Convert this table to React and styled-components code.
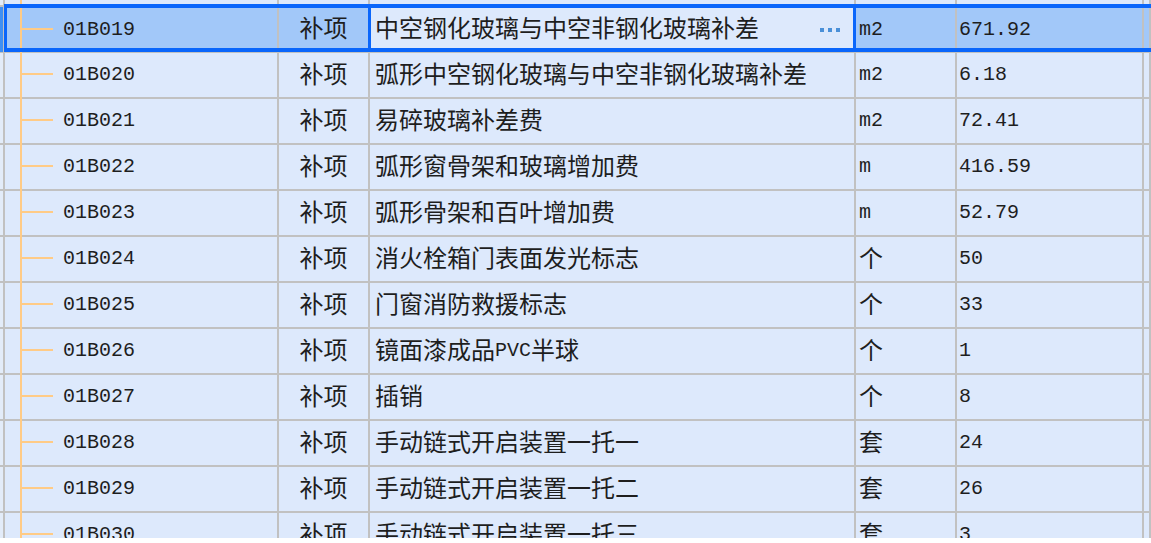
import * as React from "react";
import styled, { createGlobalStyle, css } from "styled-components";

const GlobalStyle = createGlobalStyle`
  html, body {
    margin: 0;
    padding: 0;
    background: #ffffff;
  }
`;

const Viewport = styled.div`
  width: 1151px;
  height: 538px;
  overflow: hidden;
  background: #ffffff;
`;

// scrolled position of the grid: the row above the selection is mostly hidden
const Grid = styled.div`
  margin-top: -39px;
  display: flex;
  flex-direction: column;
  font-family: "Noto Sans CJK SC", "Liberation Sans", sans-serif;
  font-size: 24px;
  color: #1e1e1e;
`;

const Row = styled.div`
  position: relative;
  display: grid;
  grid-template-columns: 5px 274px 91px 486px 101px 187px 1fr;
  height: 46px;
  background: ${({ $selected }) => ($selected ? "#a2c8f9" : "#dde9fc")};

  ${({ $selected }) =>
    $selected &&
    css`
      &::after {
        content: "";
        position: absolute;
        top: -3px;
        bottom: 1px;
        left: 4px;
        right: -10px;
        border: 4px solid #0a66fb;
        border-left-width: 3px;
        pointer-events: none;
        z-index: 2;
      }
    `}
`;

const Cell = styled.div`
  position: relative;
  box-sizing: border-box;
  display: flex;
  align-items: center;
  border-right: 2px solid #c1c1c1;
  border-bottom: 2px solid #c1c1c1;
  padding-left: ${({ $pad }) => $pad ?? 4}px;
  justify-content: ${({ $center }) => ($center ? "center" : "flex-start")};
  white-space: nowrap;
  overflow: hidden;
  line-height: 40px;
`;

const Strip = styled(Cell)`
  padding: 0;
  background: ${({ $selected }) => ($selected ? "#3f8ff3" : "#e3ecf9")};
`;

const CodeCell = styled(Cell)`
  overflow: visible;

  &::before {
    content: "";
    position: absolute;
    left: 15px;
    top: 0;
    bottom: -2px;
    width: 2px;
    background: #ffcb86;
  }

  &::after {
    content: "";
    position: absolute;
    left: 17px;
    width: 31px;
    top: calc(50% - 2px);
    height: 2px;
    background: #ffcb86;
  }
`;

const ActiveCell = styled(Cell)`
  overflow: visible;
  background: #dde9fc;

  &::after {
    content: "";
    position: absolute;
    top: 0;
    bottom: 0;
    left: -2px;
    right: -2px;
    border-left: 3px solid #0a66fb;
    border-right: 3px solid #0a66fb;
    z-index: 3;
    pointer-events: none;
  }
`;

const Han = styled.span`
  margin-bottom: 5px;
`;

const Mono = styled.span`
  font-family: "Liberation Mono", "DejaVu Sans Mono", monospace;
  font-size: 20px;
`;

const Dots = styled.span`
  margin-left: auto;
  margin-right: 14px;
  display: flex;
  gap: 4px;

  i {
    display: block;
    width: 4px;
    height: 4px;
    background: #4a90d8;
  }
`;

function Text({ children }) {
  const parts = String(children).split(/([\x20-\x7e]+)/).filter(Boolean);
  return parts.map((p, i) =>
    /^[\x20-\x7e]+$/.test(p) ? <Mono key={i}>{p}</Mono> : <Han key={i}>{p}</Han>
  );
}

const rows = [
  ["", "", "", "", ""],
  ["01B019", "补项", "中空钢化玻璃与中空非钢化玻璃补差", "m2", "671.92"],
  ["01B020", "补项", "弧形中空钢化玻璃与中空非钢化玻璃补差", "m2", "6.18"],
  ["01B021", "补项", "易碎玻璃补差费", "m2", "72.41"],
  ["01B022", "补项", "弧形窗骨架和玻璃增加费", "m", "416.59"],
  ["01B023", "补项", "弧形骨架和百叶增加费", "m", "52.79"],
  ["01B024", "补项", "消火栓箱门表面发光标志", "个", "50"],
  ["01B025", "补项", "门窗消防救援标志", "个", "33"],
  ["01B026", "补项", "镜面漆成品PVC半球", "个", "1"],
  ["01B027", "补项", "插销", "个", "8"],
  ["01B028", "补项", "手动链式开启装置一托一", "套", "24"],
  ["01B029", "补项", "手动链式开启装置一托二", "套", "26"],
  ["01B030", "补项", "手动链式开启装置一托三", "套", "3"],
];

export default function App() {
  return (
    <Viewport>
      <GlobalStyle />
      <Grid>
        {rows.map(([code, type, name, unit, qty], idx) => {
          const selected = code === "01B019";
          const NameCell = selected ? ActiveCell : Cell;
          return (
            <Row key={idx} $selected={selected}>
              <Strip $selected={selected} />
              <CodeCell $pad={58}>
                <Mono>{code}</Mono>
              </CodeCell>
              <Cell $center $pad={0}>
                <Han>{type}</Han>
              </Cell>
              <NameCell $pad={5}>
                <Text>{name}</Text>
                {selected && (
                  <Dots>
                    <i />
                    <i />
                    <i />
                  </Dots>
                )}
              </NameCell>
              <Cell $pad={3}>
                <Text>{unit}</Text>
              </Cell>
              <Cell $pad={2}>
                <Mono>{qty}</Mono>
              </Cell>
              <Cell $pad={0} />
            </Row>
          );
        })}
      </Grid>
    </Viewport>
  );
}
